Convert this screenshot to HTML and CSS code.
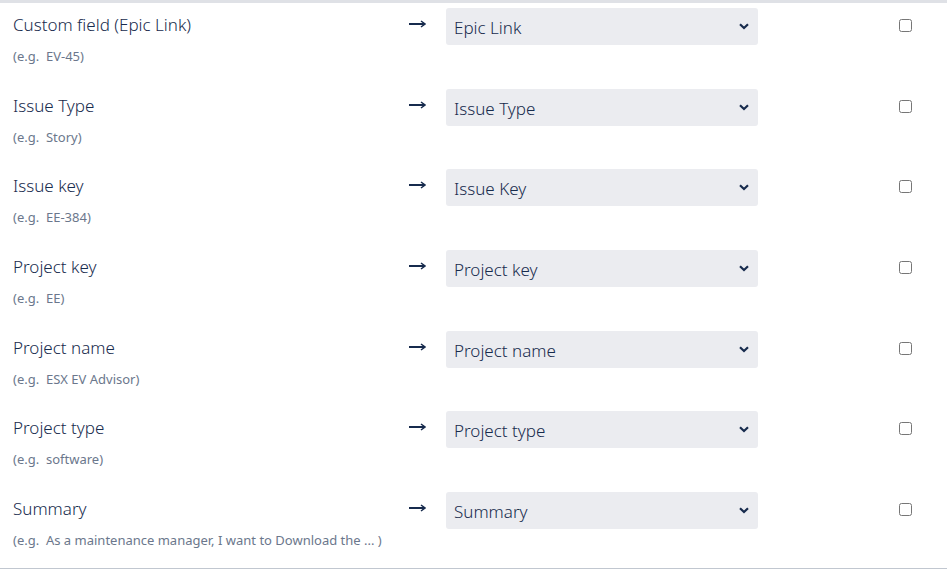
FILE: index.html
```html
<!DOCTYPE html>
<html>
<head>
<meta charset="utf-8">
<link rel="stylesheet" href="styles.css">
</head>
<body>
<div class="mapping">
  <div class="row">
    <div class="src"><div class="label">Custom field (Epic Link)</div><div class="hint">(e.g.&nbsp; EV-45)</div></div>
    <div class="arrow"><svg width="17" height="8" viewBox="0 0 17 8"><path d="M0 4H15" stroke="#172b4d" stroke-width="2"/><path d="M12 1L16 4L12 7" fill="none" stroke="#172b4d" stroke-width="1.5"/></svg></div>
    <div class="sel"><select><option>Epic Link</option></select></div>
    <div class="chk"><input type="checkbox"></div>
  </div>
  <div class="row">
    <div class="src"><div class="label">Issue Type</div><div class="hint">(e.g.&nbsp; Story)</div></div>
    <div class="arrow"><svg width="17" height="8" viewBox="0 0 17 8"><path d="M0 4H15" stroke="#172b4d" stroke-width="2"/><path d="M12 1L16 4L12 7" fill="none" stroke="#172b4d" stroke-width="1.5"/></svg></div>
    <div class="sel"><select><option>Issue Type</option></select></div>
    <div class="chk"><input type="checkbox"></div>
  </div>
  <div class="row">
    <div class="src"><div class="label">Issue key</div><div class="hint">(e.g.&nbsp; EE-384)</div></div>
    <div class="arrow"><svg width="17" height="8" viewBox="0 0 17 8"><path d="M0 4H15" stroke="#172b4d" stroke-width="2"/><path d="M12 1L16 4L12 7" fill="none" stroke="#172b4d" stroke-width="1.5"/></svg></div>
    <div class="sel"><select><option>Issue Key</option></select></div>
    <div class="chk"><input type="checkbox"></div>
  </div>
  <div class="row">
    <div class="src"><div class="label">Project key</div><div class="hint">(e.g.&nbsp; EE)</div></div>
    <div class="arrow"><svg width="17" height="8" viewBox="0 0 17 8"><path d="M0 4H15" stroke="#172b4d" stroke-width="2"/><path d="M12 1L16 4L12 7" fill="none" stroke="#172b4d" stroke-width="1.5"/></svg></div>
    <div class="sel"><select><option>Project key</option></select></div>
    <div class="chk"><input type="checkbox"></div>
  </div>
  <div class="row">
    <div class="src"><div class="label">Project name</div><div class="hint">(e.g.&nbsp; ESX EV Advisor)</div></div>
    <div class="arrow"><svg width="17" height="8" viewBox="0 0 17 8"><path d="M0 4H15" stroke="#172b4d" stroke-width="2"/><path d="M12 1L16 4L12 7" fill="none" stroke="#172b4d" stroke-width="1.5"/></svg></div>
    <div class="sel"><select><option>Project name</option></select></div>
    <div class="chk"><input type="checkbox"></div>
  </div>
  <div class="row">
    <div class="src"><div class="label">Project type</div><div class="hint">(e.g.&nbsp; software)</div></div>
    <div class="arrow"><svg width="17" height="8" viewBox="0 0 17 8"><path d="M0 4H15" stroke="#172b4d" stroke-width="2"/><path d="M12 1L16 4L12 7" fill="none" stroke="#172b4d" stroke-width="1.5"/></svg></div>
    <div class="sel"><select><option>Project type</option></select></div>
    <div class="chk"><input type="checkbox"></div>
  </div>
  <div class="row">
    <div class="src"><div class="label">Summary</div><div class="hint">(e.g.&nbsp; As a maintenance manager, I want to Download the ... )</div></div>
    <div class="arrow"><svg width="17" height="8" viewBox="0 0 17 8"><path d="M0 4H15" stroke="#172b4d" stroke-width="2"/><path d="M12 1L16 4L12 7" fill="none" stroke="#172b4d" stroke-width="1.5"/></svg></div>
    <div class="sel"><select><option>Summary</option></select></div>
    <div class="chk"><input type="checkbox"></div>
  </div>
</div>
</body>
</html>
```
FILE: styles.css
```css
html, body {
  margin: 0;
  padding: 0;
  background: #fff;
}
body {
  font-family: "Noto Sans", "Open Sans", sans-serif;
  color: #172b4d;
  width: 947px;
  height: 569px;
  overflow: hidden;
}
.mapping {
  border-top: 3px solid #dfe1e6;
  border-bottom: 1px solid #c1c7d0;
  width: 947px;
}
.row {
  display: grid;
  grid-template-columns: 396px 37px 312px 1fr;
  height: 80.67px;
  padding-left: 13px;
  box-sizing: border-box;
}
.src {
  padding-top: 10px;
}
.label {
  font-size: 17px;
  font-weight: 300;
  line-height: 24px;
  color: #172b4d;
  white-space: nowrap;
}
.hint {
  margin-top: 9px;
  font-size: 13px;
  line-height: 20px;
  color: #6b778c;
  white-space: nowrap;
}
.arrow {
  padding-top: 17px;
}
.arrow svg {
  display: block;
}
.sel {
  padding-top: 5px;
}
.sel select {
  appearance: none;
  -webkit-appearance: none;
  width: 312px;
  height: 37px;
  border: none;
  border-radius: 3px;
  background-color: #ebecf0;
  background-image: url("data:image/svg+xml,%3Csvg xmlns='http://www.w3.org/2000/svg' width='10' height='7' viewBox='0 0 10 7'%3E%3Cpath d='M1 1.2L5 5L9 1.2' fill='none' stroke='%23172b4d' stroke-width='2.2'/%3E%3C/svg%3E");
  background-repeat: no-repeat;
  background-position: right 9px center;
  padding: 2px 8px 0;
  font-family: inherit;
  font-size: 17px;
  font-weight: 300;
  color: #172b4d;
  outline: none;
}
.chk {
  padding-top: 16px;
  padding-left: 141px;
}
.chk input {
  margin: 0;
  width: 13px;
  height: 13px;
  display: block;
}
```
